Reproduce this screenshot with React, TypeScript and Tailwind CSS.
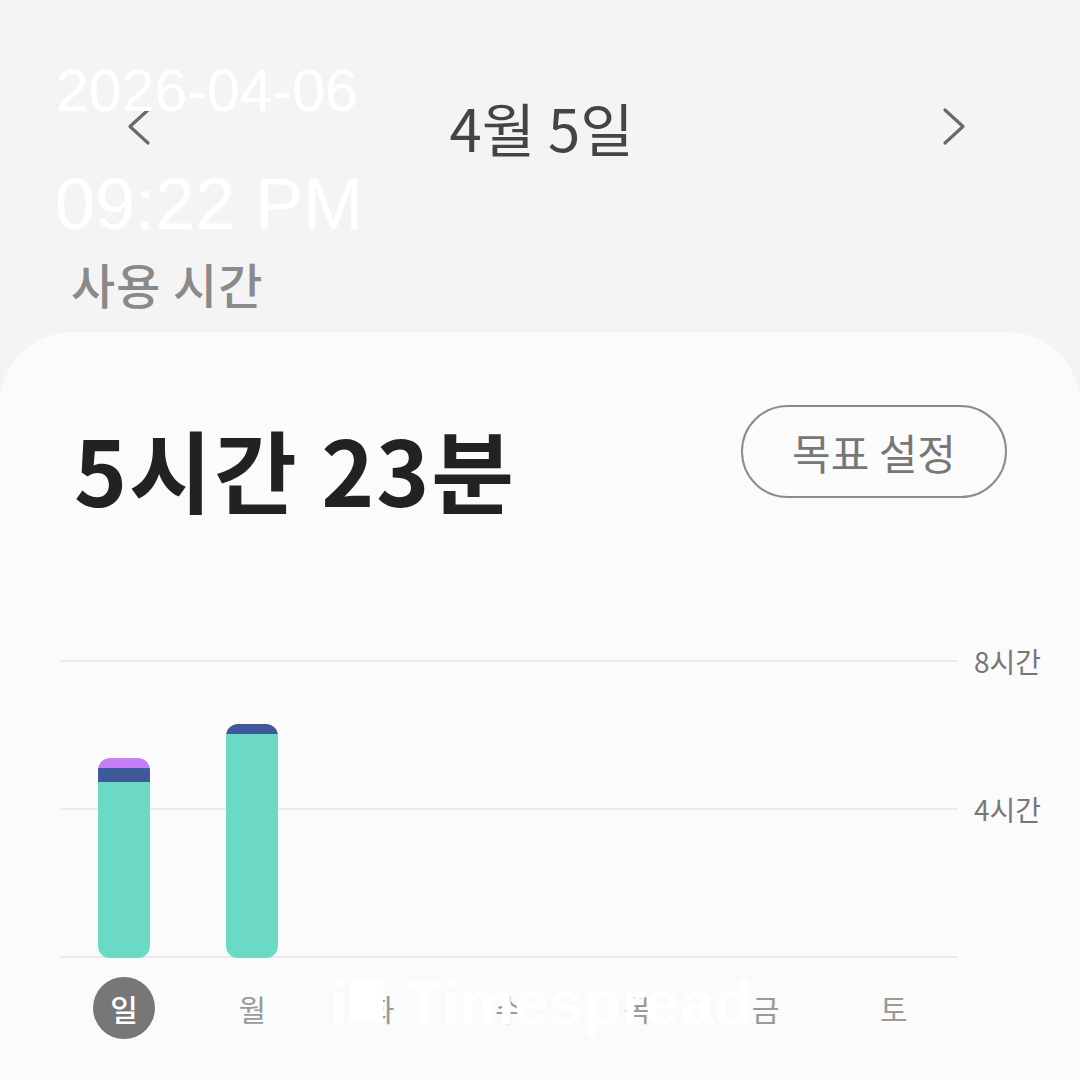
import React from "react";

const KR = { fontFamily: '"Noto Sans CJK KR", "Noto Sans", sans-serif' };

const days = ["일", "월", "화", "수", "목", "금", "토"];

type Seg = { color: string; h: number };
const bars: Seg[][] = [
  [
    { color: "#c77ff7", h: 10 },
    { color: "#3e5899", h: 14 },
    { color: "#6bd9c3", h: 176 },
  ],
  [
    { color: "#3e5899", h: 10 },
    { color: "#6bd9c3", h: 224 },
  ],
  [],
  [],
  [],
  [],
  [],
];

export default function App() {
  return (
    <div className="relative w-[1080px] h-[1080px] overflow-hidden bg-[#f4f4f4] flex flex-col" style={KR}>
      {/* top section */}
      <div className="h-[332px] shrink-0 flex flex-col">
        <div className="mt-[87px] h-[80px] flex items-center justify-between pl-[126px] pr-[113px]">
          <svg width="26" height="40" viewBox="0 0 26 40">
            <path d="M22 3 L4 19.5 L22 36" fill="none" stroke="#6a6a6a" strokeWidth="3.2" strokeLinecap="round" strokeLinejoin="round" />
          </svg>
          <div className="mr-[10px] text-[58px] leading-none text-[#444]">4월 5일</div>
          <svg width="26" height="40" viewBox="0 0 26 40">
            <path d="M4 3 L22 19.5 L4 36" fill="none" stroke="#6a6a6a" strokeWidth="3.2" strokeLinecap="round" strokeLinejoin="round" />
          </svg>
        </div>
        <div className="mt-[88px] pl-[71px] text-[48px] leading-[1.2] font-medium text-[#8a8a8a] tracking-[1px]">사용 시간</div>
      </div>

      {/* card */}
      <div className="flex-1 bg-[#fbfbfb] rounded-t-[72px] flex flex-col">
        <div className="flex items-start justify-between pl-[74px] pr-[73px]">
          <div className="mt-[91px] text-[90px] leading-none font-bold text-[#222] tracking-[2px]">5시간 23분</div>
          <div className="mt-[73px] w-[266px] h-[93px] rounded-full border-2 border-[#8c8c8c] flex items-center justify-center text-[42px] text-[#777] leading-none">
            목표 설정
          </div>
        </div>

        {/* chart */}
        <div className="mt-[134px] pl-[60px] grid">
          <div className="col-start-1 row-start-1 flex flex-col gap-[120px]">
            {["8시간", "4시간", ""].map((l, i) => (
              <div key={i} className="h-[28px] flex items-center">
                <div className="w-[898px] h-[2px] bg-[#ececec]" />
                <div className="ml-[16px] text-[28px] leading-none text-[#777]">{l}</div>
              </div>
            ))}
          </div>
          <div className="col-start-1 row-start-1 w-[898px] grid grid-cols-7 items-end pb-[13px]">
            {bars.map((segs, i) => (
              <div key={i} className="flex justify-center">
                {segs.length > 0 && (
                  <div className="w-[52px] rounded-[12px] overflow-hidden flex flex-col">
                    {segs.map((s, j) => (
                      <div key={j} style={{ height: s.h, backgroundColor: s.color }} />
                    ))}
                  </div>
                )}
              </div>
            ))}
          </div>
        </div>

        {/* day labels */}
        <div className="mt-[6px] ml-[60px] w-[898px] grid grid-cols-7">
          {days.map((d, i) => (
            <div key={d} className="flex justify-center">
              {i === 0 ? (
                <div className="w-[62px] h-[62px] rounded-full bg-[#777] flex items-center justify-center text-white text-[30px] font-medium leading-none">
                  {d}
                </div>
              ) : (
                <div className="h-[62px] flex items-center text-[30px] text-[#9a9a9a] leading-none">{d}</div>
              )}
            </div>
          ))}
        </div>
      </div>

      {/* watermarks */}
      <div
        className="absolute left-[56px] top-[62px] text-[59px] leading-none text-white"
        style={{ fontFamily: '"Liberation Sans", Arial, sans-serif' }}
      >
        2026-04-06
      </div>
      <div
        className="absolute left-[55px] top-[168px] text-[72px] leading-none text-white"
        style={{ fontFamily: '"Liberation Sans", Arial, sans-serif' }}
      >
        09:22 PM
      </div>
      <div
        className="absolute left-[330px] top-[972px] flex items-end text-white font-bold text-[62px] leading-none"
        style={{ fontFamily: '"Liberation Sans", Arial, sans-serif' }}
      >
        <span>i</span>
        <div className="ml-[3px] mb-[12px] w-[33px] h-[42px] bg-white" />
        <span className="ml-[22px]">Timespread</span>
      </div>
    </div>
  );
}
